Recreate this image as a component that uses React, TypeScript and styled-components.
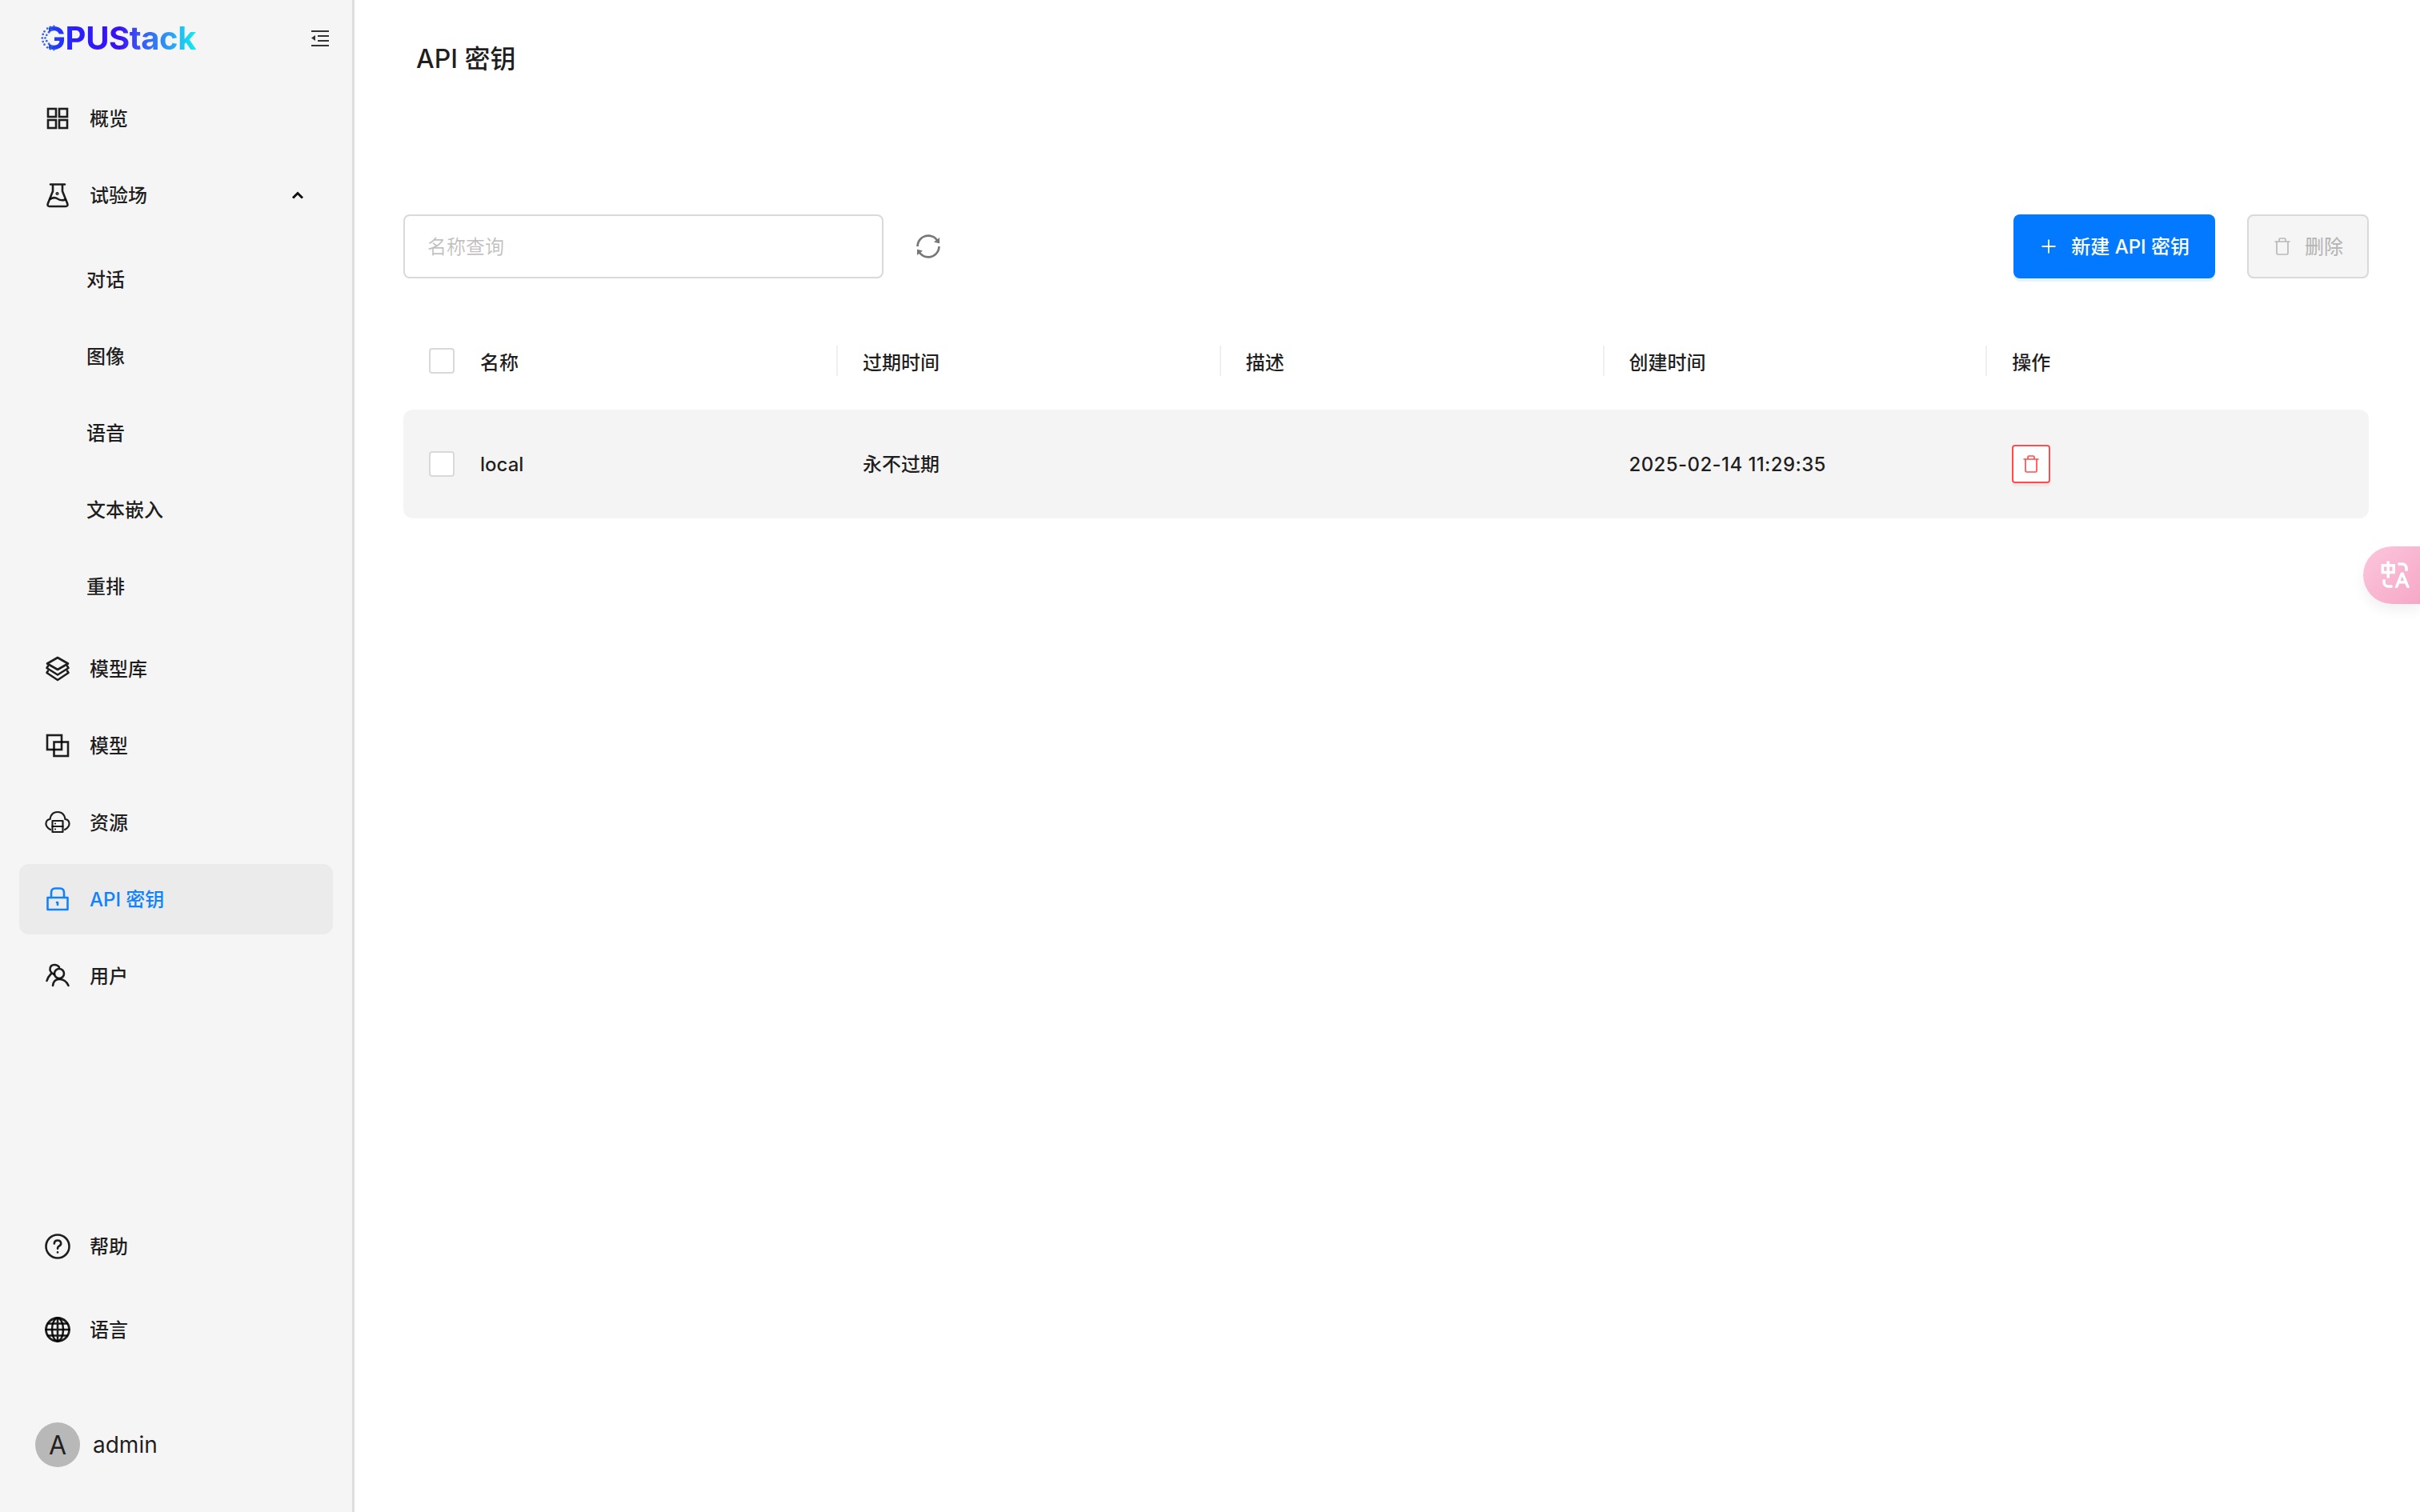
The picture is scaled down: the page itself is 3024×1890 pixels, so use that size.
import React from "react";
import styled, { createGlobalStyle } from "styled-components";
import { AiOutlinePlus, AiOutlineSync } from "react-icons/ai";
import { RiTranslate } from "react-icons/ri";

const GlobalStyle = createGlobalStyle`
  html, body {
    margin: 0;
    padding: 0;
    background: #fff;
  }
  body {
    font-family: Inter, "Noto Sans CJK SC", sans-serif;
    font-size: 24px;
    color: rgba(0, 0, 0, 0.88);
  }
  * {
    box-sizing: border-box;
  }
`;

const Page = styled.div`
  display: flex;
  height: 1890px;
  overflow: hidden;
  position: relative;
`;

const Sidebar = styled.aside`
  display: flex;
  flex-direction: column;
  width: 443px;
  flex-shrink: 0;
  padding: 0 24px;
  background: #f5f5f5;
  border-right: 3px solid #dedede;
`;

const LogoRow = styled.div`
  display: flex;
  align-items: center;
  justify-content: space-between;
  height: 96px;
  padding: 0 5px 0 28px;
`;

const Logo = styled.div`
  position: relative;
  font-size: 40px;
  line-height: 48px;
  font-weight: 700;
  letter-spacing: -0.4px;
  background: linear-gradient(
    90deg,
    #1c50f0 0%,
    #2a1fff 22%,
    #3a10f5 50%,
    #3a50f5 62%,
    #2f90f5 80%,
    #10eef0 100%
  );
  -webkit-background-clip: text;
  background-clip: text;
  color: transparent;
`;

const LogoDots = styled.svg`
  position: absolute;
  left: -1px;
  top: 7px;
  width: 20px;
  height: 33px;
`;

const Nav = styled.nav`
  display: flex;
  flex-direction: column;
  gap: 8px;
  margin-top: 8px;
`;

const SubMenu = styled.div`
  display: flex;
  flex-direction: column;
  gap: 8px;
  padding: 9px 0 7px;
`;

const NavItem = styled.div<{ $active?: boolean }>`
  display: flex;
  align-items: center;
  gap: 24px;
  height: 88px;
  padding: 0 32px;
  border-radius: 12px;
  font-weight: 500;
  background: ${(p) => (p.$active ? "#ebebeb" : "transparent")};
  color: ${(p) => (p.$active ? "#0f82ff" : "rgba(0, 0, 0, 0.88)")};
`;

const SubItem = styled(NavItem)`
  padding-left: 84px;
`;

// CJK glyphs sit a little low on the Inter baseline, this lifts them back
const Label = styled.span`
  padding-bottom: 3px;
`;

const Chevron = styled.svg`
  margin-left: auto;
  margin-right: 4px;
  width: 16px;
  height: 10px;
`;

const FootNav = styled(Nav)`
  margin-top: auto;
  gap: 16px;
`;

const UserRow = styled.div`
  display: flex;
  align-items: center;
  gap: 16px;
  margin: 72px 0 56px 20px;
  font-size: 28px;
`;

const Avatar = styled.div`
  display: flex;
  align-items: center;
  justify-content: center;
  width: 56px;
  height: 56px;
  border-radius: 50%;
  background: #b8b8b8;
  font-size: 32px;
  color: #222;
`;

const Main = styled.main`
  flex: 1;
  padding: 0 64px 0 61px;
`;

const Title = styled.h1`
  display: flex;
  align-items: center;
  height: 144px;
  margin: 0;
  padding: 0 0 2px 16px;
  font-size: 32px;
  font-weight: 500;
`;

const Toolbar = styled.div`
  display: flex;
  align-items: center;
  margin-top: 124px;
`;

const SearchInput = styled.input`
  width: 600px;
  height: 80px;
  padding: 0 28px;
  border: 2px solid #d9d9d9;
  border-radius: 8px;
  background: #fff;
  font: inherit;
  outline: none;
  &::placeholder {
    color: rgba(0, 0, 0, 0.25);
  }
`;

const RefreshIcon = styled(AiOutlineSync)`
  margin-left: 38px;
  font-size: 36px;
  color: #777;
`;

const Actions = styled.div`
  display: flex;
  gap: 40px;
  margin-left: auto;
`;

const PrimaryButton = styled.button`
  display: flex;
  align-items: center;
  gap: 16px;
  height: 80px;
  padding: 0 32px;
  border: none;
  border-radius: 8px;
  background: #0279ff;
  box-shadow: 0 4px 0 rgba(5, 145, 255, 0.1);
  color: #fff;
  font: inherit;
  font-weight: 500;
`;

const DisabledButton = styled.button`
  display: flex;
  align-items: center;
  gap: 16px;
  height: 80px;
  padding: 0 30px;
  border: 2px solid #d9d9d9;
  border-radius: 8px;
  background: #f5f5f5;
  color: rgba(0, 0, 0, 0.25);
  font: inherit;
  font-weight: 500;
`;

const TableGrid = styled.div`
  display: grid;
  grid-template-columns: 541px repeat(4, 1fr);
  align-items: center;
  font-weight: 500;
`;

const HeadRow = styled(TableGrid)`
  height: 96px;
  margin-top: 55px;
`;

const BodyRow = styled(TableGrid)`
  height: 136px;
  margin-top: 13px;
  border-radius: 12px;
  background: #f4f4f4;
`;

const Cell = styled.div<{ $divider?: boolean; $first?: boolean }>`
  position: relative;
  display: flex;
  align-items: center;
  gap: 32px;
  padding-left: ${(p) => (p.$first ? "32px" : "33px")};
  ${(p) =>
    p.$divider &&
    `&::before {
      content: "";
      position: absolute;
      left: 0;
      top: 50%;
      width: 2px;
      height: 38px;
      margin-top: -19px;
      background: #f0f0f0;
    }`}
`;

const DateText = styled.span`
  letter-spacing: 0.4px;
`;

const Checkbox = styled.span`
  display: block;
  width: 32px;
  height: 32px;
  border: 2px solid #d9d9d9;
  border-radius: 4px;
  background: #fff;
`;

const DangerButton = styled.button`
  display: flex;
  align-items: center;
  justify-content: center;
  width: 48px;
  height: 48px;
  padding: 0;
  border: 2px solid #ff4d4f;
  border-radius: 4px;
  background: #fff;
  box-shadow: 0 4px 0 rgba(255, 38, 5, 0.06);
  color: #ff4d4f;
`;

const TranslateTab = styled.div`
  position: absolute;
  right: 0;
  top: 683px;
  display: flex;
  align-items: center;
  justify-content: center;
  width: 71px;
  height: 72px;
  padding-left: 8px;
  border-radius: 36px 0 0 36px;
  background: linear-gradient(135deg, #fcc6dc, #f6a8c6);
  box-shadow: 0 8px 16px rgba(0, 0, 0, 0.06);
  color: #fff;
  font-size: 42px;
`;

const Icon = ({ children, size = 32, weight = 2.6 }: { children: React.ReactNode; size?: number; weight?: number }) => (
  <svg
    width={size}
    height={size}
    viewBox="0 0 32 32"
    fill="none"
    stroke="currentColor"
    strokeWidth={weight}
    strokeLinecap="round"
    strokeLinejoin="round"
    style={{ flexShrink: 0 }}
  >
    {children}
  </svg>
);

const TrashIcon = ({ size }: { size: number }) => (
  <svg width={size} height={size} viewBox="0 0 24 24" fill="none" stroke="currentColor" strokeWidth="1.7">
    <path d="M2.5 6h19M5 6v14.5q0 1.5 1.5 1.5h11q1.500 0 1.500-1.500V6M8 6V3.500Q8 2 9.500 2h5Q16 2 16 3.500V6" />
  </svg>
);

const icons = {
  grid: (
    <Icon>
      <rect x="4" y="4" width="10" height="10" strokeLinejoin="miter" />
      <rect x="18" y="4" width="10" height="10" strokeLinejoin="miter" />
      <rect x="4" y="18" width="10" height="10" strokeLinejoin="miter" />
      <rect x="18" y="18" width="10" height="10" strokeLinejoin="miter" />
    </Icon>
  ),
  flask: (
    <Icon>
      <path d="M7 2.500h18M10 2.500V11L3.800 26.500Q2.800 30 6 30h20q3.200 0 2.200-3.500L22 11V2.500" />
      <path d="M6.500 21q5-3.500 9.500-.5t9.500 1" />
      <circle cx="15.500" cy="14" r="0.8" />
    </Icon>
  ),
  layers: (
    <Icon>
      <path d="M16 2 29 9.500 16 17 3 9.500Z" />
      <path d="M4 12.500 2.500 15 16 23.500 29.500 15 28 12.500" />
      <path d="M4 18.500 2.500 21 16 30 29.500 21 28 18.500" />
    </Icon>
  ),
  models: (
    <Icon>
      <rect x="3" y="3" width="18" height="18" strokeLinejoin="miter" />
      <rect x="11.500" y="11.500" width="17.500" height="17.500" strokeLinejoin="miter" />
    </Icon>
  ),
  cloud: (
    <Icon weight={2.2}>
      <path d="M7 25Q1 21.500 1.500 17 2 12.500 6.500 12 8 3 16 3T25.500 12Q30 12.500 30.500 17 31 21.500 25 25" />
      <rect x="9.500" y="14" width="13" height="14" />
      <path d="M9.500 21h13M13 17.500h.01M13 24.500h.01" />
    </Icon>
  ),
  lock: (
    <Icon>
      <path d="M8 14V8q0-5.500 5-5.500h6q5 0 5 5.500v6" />
      <rect x="3.500" y="14" width="25" height="15" />
      <path d="M16 20v3M15 20h1" />
    </Icon>
  ),
  users: (
    <Icon>
      <circle cx="18" cy="13" r="6" />
      <path d="M10 28Q11 20 18 20 26 20 29.500 28" />
      <path d="M11.500 14Q6 11 6.500 7 7 2 12 2 16 2 18 5M2.500 22Q4 17 8 13" />
    </Icon>
  ),
  help: (
    <Icon>
      <circle cx="16" cy="16" r="14.500" />
      <path d="M11.800 12.500q.2-4 4.200-4t4.200 3.700q0 2.300-2.500 3.500-1.700.9-1.700 3M16 23.300v.1" />
    </Icon>
  ),
  globe: (
    <Icon>
      <circle cx="16" cy="16" r="14.500" strokeWidth="2.800" />
      <ellipse cx="16" cy="16" rx="7" ry="14.500" />
      <path d="M16 1.500v29M1.500 16h29M4 8.500h24M4 23.500h24" />
    </Icon>
  ),
};

const Collapse = () => (
  <svg width="22" height="20" viewBox="0 0 22 20" fill="#333">
    <rect x="0" y="0" width="22" height="2" />
    <rect x="8" y="6" width="14" height="2" />
    <rect x="8" y="12" width="14" height="2" />
    <rect x="0" y="18" width="22" height="2" />
    <path d="M0 9.500 5 6v7z" />
  </svg>
);

const dots = [
  [18, 2], [13, 3], [9, 5], [15, 7], [5, 9], [11, 10], [3, 13], [8, 14], [2, 18], [6, 18],
  [3, 23], [8, 22], [5, 27], [11, 26], [9, 31], [15, 29], [13, 33], [18, 34],
];

const App = () => {
  return (
    <Page>
      <GlobalStyle />
      <Sidebar>
        <LogoRow>
          <Logo>
            GPUStack
            <LogoDots viewBox="0 0 22 36">
              <rect x="0" y="0" width="11" height="36" fill="#f5f5f5" />
              {dots.map(([x, y]) => (
                <circle key={`${x}-${y}`} cx={x} cy={y} r="1.500" fill="#3a62e8" />
              ))}
            </LogoDots>
          </Logo>
          <Collapse />
        </LogoRow>
        <Nav>
          <NavItem>
            {icons.grid}
            <Label>概览</Label>
          </NavItem>
          <NavItem>
            {icons.flask}
            <Label>试验场</Label>
            <Chevron viewBox="0 0 16 10" fill="none" stroke="#111" strokeWidth="3">
              <path d="M2 8.500 8 2.500l6 6" />
            </Chevron>
          </NavItem>
          <SubMenu>
            <SubItem><Label>对话</Label></SubItem>
            <SubItem><Label>图像</Label></SubItem>
            <SubItem><Label>语音</Label></SubItem>
            <SubItem><Label>文本嵌入</Label></SubItem>
            <SubItem><Label>重排</Label></SubItem>
          </SubMenu>
          <NavItem>
            {icons.layers}
            <Label>模型库</Label>
          </NavItem>
          <NavItem>
            {icons.models}
            <Label>模型</Label>
          </NavItem>
          <NavItem>
            {icons.cloud}
            <Label>资源</Label>
          </NavItem>
          <NavItem $active>
            {icons.lock}
            <Label>API 密钥</Label>
          </NavItem>
          <NavItem>
            {icons.users}
            <Label>用户</Label>
          </NavItem>
        </Nav>
        <FootNav>
          <NavItem>
            {icons.help}
            <Label>帮助</Label>
          </NavItem>
          <NavItem>
            {icons.globe}
            <Label>语言</Label>
          </NavItem>
        </FootNav>
        <UserRow>
          <Avatar>A</Avatar>
          admin
        </UserRow>
      </Sidebar>
      <Main>
        <Title>API 密钥</Title>
        <Toolbar>
          <SearchInput placeholder="名称查询" />
          <RefreshIcon />
          <Actions>
            <PrimaryButton>
              <AiOutlinePlus size={24} />
              <Label>新建 API 密钥</Label>
            </PrimaryButton>
            <DisabledButton>
              <TrashIcon size={24} />
              <Label>删除</Label>
            </DisabledButton>
          </Actions>
        </Toolbar>
        <HeadRow>
          <Cell $first>
            <Checkbox />
            名称
          </Cell>
          <Cell $divider>过期时间</Cell>
          <Cell $divider>描述</Cell>
          <Cell $divider>创建时间</Cell>
          <Cell $divider>操作</Cell>
        </HeadRow>
        <BodyRow>
          <Cell $first>
            <Checkbox />
            local
          </Cell>
          <Cell>
            <Label>永不过期</Label>
          </Cell>
          <Cell />
          <Cell>
            <DateText>2025-02-14 11:29:35</DateText>
          </Cell>
          <Cell>
            <DangerButton>
              <TrashIcon size={24} />
            </DangerButton>
          </Cell>
        </BodyRow>
      </Main>
      <TranslateTab>
        <RiTranslate />
      </TranslateTab>
    </Page>
  );
};

export default App;
